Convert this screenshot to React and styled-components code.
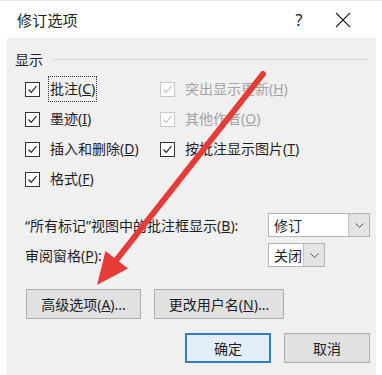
import React from 'react'
import styled, { createGlobalStyle } from 'styled-components'

const GlobalStyle = createGlobalStyle`
  html, body {
    margin: 0;
    padding: 0;
    background: #fff;
  }
  * {
    box-sizing: border-box;
  }
`

const FONT = `"Noto Sans", "Noto Sans CJK SC", sans-serif`

const Window = styled.div`
  position: relative;
  width: 382px;
  height: 375px;
  overflow: hidden;
  display: flex;
  flex-direction: column;
  background: #fff;
  font-family: ${FONT};
  color: #1e1e1e;
`

const TitleBar = styled.div`
  height: 38px;
  flex: none;
  display: flex;
  align-items: center;
  padding: 0 11px 0 17px;
  border-top: 1px solid #e8e8e8;
`

const Title = styled.div`
  flex: 1;
  font-size: 15px;
  letter-spacing: 0.2px;
`

const TitleButton = styled.div`
  width: ${p => p.$w}px;
  height: 30px;
  display: flex;
  align-items: center;
  justify-content: center;
  font-size: 16px;
  color: #222;
`

const Body = styled.div`
  flex: 1;
  margin: 0 6px 0 7px;
  background: #f0f0f0;
  padding: 11px 6px 0 8px;
  display: flex;
  flex-direction: column;
`

const GroupHeader = styled.div`
  height: 20px;
  display: flex;
  align-items: center;
  gap: 10px;
  font-size: 14px;
  padding-right: 2px;

  &::after {
    content: '';
    flex: 1;
    height: 1px;
    background: #d9d9d9;
  }
`

const CheckGrid = styled.div`
  margin: 5px 0 0 10px;
  display: grid;
  grid-template-columns: 135px 1fr;
  grid-auto-rows: 30px;
`

const CheckRow = styled.div`
  display: flex;
  align-items: center;
  gap: 8px;
  font-size: 14px;
  color: ${p => (p.$disabled ? '#a3a3a3' : '#1e1e1e')};
`

const Box = styled.span`
  width: 15px;
  height: 15px;
  flex: none;
  background: #fff;
  border: 1px solid ${p => (p.$disabled ? '#c8c8c8' : '#333')};
  display: flex;
  align-items: center;
  justify-content: center;
`

const Label = styled.span`
  padding: 2px 1px;
  border: 1px dotted ${p => (p.$focus ? '#333' : 'transparent')};
  line-height: 20px;
  white-space: nowrap;
`

const FormGrid = styled.div`
  margin: 19px 0 0 10px;
  display: grid;
  grid-template-columns: 243px 1fr;
  grid-auto-rows: 24px;
  row-gap: 6px;
  align-items: center;
  font-size: 14px;
`

const FormLabel = styled.span`
  white-space: nowrap;
`

const Combo = styled.div`
  width: ${p => p.$w}px;
  height: 24px;
  display: flex;
  background: #fff;
  border: 1px solid #b5b5b5;
  font-size: 14px;
`

const ComboValue = styled.div`
  flex: 1;
  display: flex;
  align-items: center;
  padding-left: 5px;
`

const ComboArrow = styled.div`
  width: 21px;
  display: flex;
  align-items: center;
  justify-content: center;
  background: #e3e3e3;
  border-left: 1px solid #c4c4c4;
`

const ButtonRow = styled.div`
  display: flex;
  gap: 13px;
  margin-top: ${p => p.$top}px;
  padding-left: ${p => p.$indent || 0}px;
  justify-content: ${p => (p.$end ? 'flex-end' : 'flex-start')};
`

const Button = styled.div`
  width: ${p => p.$w}px;
  height: 30px;
  display: flex;
  align-items: center;
  justify-content: center;
  font-size: 14px;
  background: ${p => (p.$primary ? '#e3eef8' : '#e1e1e1')};
  border: ${p => (p.$primary ? '2px solid #2f7fc8' : '1px solid #adadad')};
  white-space: nowrap;
`

const Overlay = styled.svg`
  position: absolute;
  left: 0;
  top: 0;
  pointer-events: none;
`

const Check = ({ disabled }) => (
  <svg width="11" height="11" viewBox="0 0 11 11">
    <polyline
      points="1.5,5.5 4.2,8.3 9.5,2.2"
      fill="none"
      stroke={disabled ? '#c4c4c4' : '#222'}
      strokeWidth="1.2"
    />
  </svg>
)

const Chevron = () => (
  <svg width="9" height="5" viewBox="0 0 9 5">
    <polyline points="0.5,0.5 4.5,4.3 8.5,0.5" fill="none" stroke="#555" strokeWidth="1" />
  </svg>
)

const CheckItem = ({ children, disabled, focus }) => (
  <CheckRow $disabled={disabled}>
    <Box $disabled={disabled}>
      <Check disabled={disabled} />
    </Box>
    <Label $focus={focus}>{children}</Label>
  </CheckRow>
)

export default function App() {
  return (
    <>
      <GlobalStyle />
      <Window>
        <TitleBar>
          <Title>修订选项</Title>
          <TitleButton $w={30}>?</TitleButton>
          <TitleButton $w={57}>
            <svg width="16" height="16" viewBox="0 0 16 16">
              <path d="M1 1 L15 15 M15 1 L1 15" stroke="#222" strokeWidth="1.1" />
            </svg>
          </TitleButton>
        </TitleBar>
        <Body>
          <GroupHeader>显示</GroupHeader>
          <CheckGrid>
            <CheckItem focus>
              批注(<u>C</u>)
            </CheckItem>
            <CheckItem disabled>
              突出显示更新(<u>H</u>)
            </CheckItem>
            <CheckItem>
              墨迹(<u>I</u>)
            </CheckItem>
            <CheckItem disabled>
              其他作者(<u>O</u>)
            </CheckItem>
            <CheckItem>
              插入和删除(<u>D</u>)
            </CheckItem>
            <CheckItem>
              按批注显示图片(<u>T</u>)
            </CheckItem>
            <CheckItem>
              格式(<u>F</u>)
            </CheckItem>
          </CheckGrid>
          <FormGrid>
            <FormLabel>
              “所有标记”视图中的批注框显示(<u>B</u>):
            </FormLabel>
            <Combo $w={102}>
              <ComboValue>修订</ComboValue>
              <ComboArrow>
                <Chevron />
              </ComboArrow>
            </Combo>
            <FormLabel>
              审阅窗格(<u>P</u>):
            </FormLabel>
            <Combo $w={57}>
              <ComboValue>关闭</ComboValue>
              <ComboArrow>
                <Chevron />
              </ComboArrow>
            </Combo>
          </FormGrid>
          <ButtonRow $top={22} $indent={11}>
            <Button $w={115}>
              高级选项(<u>A</u>)...
            </Button>
            <Button $w={130}>
              更改用户名(<u>N</u>)...
            </Button>
          </ButtonRow>
          <ButtonRow $top={14} $end>
            <Button $w={86} $primary>
              确定
            </Button>
            <Button $w={86}>取消</Button>
          </ButtonRow>
        </Body>
        <Overlay width="382" height="375" viewBox="0 0 382 375">
          <line x1="263" y1="74" x2="114" y2="263" stroke="#e63c37" strokeWidth="6" strokeLinecap="round" />
          <polygon points="97,285 128,268.5 105.5,251" fill="#e63c37" />
        </Overlay>
      </Window>
    </>
  )
}
